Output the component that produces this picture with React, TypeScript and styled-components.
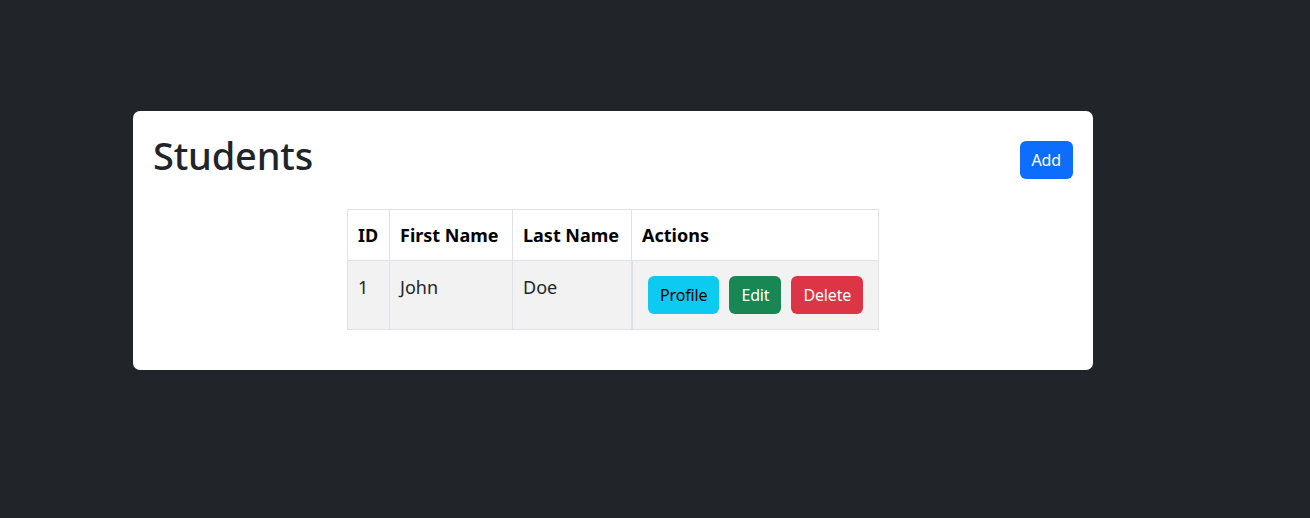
import React from "react";
import styled, { createGlobalStyle } from "styled-components";

const Global = createGlobalStyle`
  html, body { margin: 0; padding: 0; background: #212529; }
  body { font-family: "Noto Sans", "Open Sans", sans-serif; color: #212529; }
  * { box-sizing: border-box; }
`;

const Page = styled.div`
  padding: 111px 0 0 133px;
  min-height: 518px;
`;

const Card = styled.div`
  width: 960px;
  background: #fff;
  border-radius: 7px;
  padding: 20px;
`;

const Header = styled.div`
  display: flex;
  justify-content: space-between;
  align-items: flex-end;
`;

const Title = styled.h1`
  margin: 0;
  font-size: 38px;
  line-height: 48px;
  font-weight: 500;
  color: #212529;
  letter-spacing: -0.2px;
`;

const Button = styled.button<{ $bg: string; $fg: string }>`
  display: inline-block;
  font-family: inherit;
  font-size: 16px;
  line-height: 24px;
  letter-spacing: -0.15px;
  padding: 7px 12px;
  height: 38px;
  border: none;
  border-radius: 6px;
  background: ${(p) => p.$bg};
  color: ${(p) => p.$fg};
  white-space: nowrap;
  cursor: pointer;
`;

const Table = styled.table`
  margin: 30px auto 20px;
  border-collapse: collapse;
  table-layout: fixed;
  width: 531px;
  font-size: 18px;
  line-height: 27px;
`;

const Th = styled.th<{ $w: number }>`
  width: ${(p) => p.$w}px;
  text-align: left;
  font-weight: 700;
  color: #000;
  padding: 12px 10px 11px;
  border: 1px solid #dee2e6;
  background: #fff;
  white-space: nowrap;
`;

const Td = styled.td<{ $accent?: boolean }>`
  vertical-align: top;
  padding: ${(p) => (p.$accent ? "10px" : "13px 10px 10px")};
  border: 1px solid #dee2e6;
  background: #f2f2f2;
  color: #212529;
  white-space: nowrap;
  ${(p) => (p.$accent ? "box-shadow: inset 1px 0 0 #dcdfe3;" : "")}
`;

const Actions = styled.div`
  display: flex;
  gap: 10px;
  padding: 5px 5px 5px 6px;
`;

const students = [{ id: 1, first: "John", last: "Doe" }];

export default function App() {
  return (
    <Page>
      <Global />
      <Card>
        <Header>
          <Title>Students</Title>
          <Button $bg="#0d6efd" $fg="#fff">Add</Button>
        </Header>
        <Table>
          <thead>
            <tr>
              <Th $w={42}>ID</Th>
              <Th $w={123}>First Name</Th>
              <Th $w={119}>Last Name</Th>
              <Th $w={247}>Actions</Th>
            </tr>
          </thead>
          <tbody>
            {students.map((s) => (
              <tr key={s.id}>
                <Td>{s.id}</Td>
                <Td>{s.first}</Td>
                <Td>{s.last}</Td>
                <Td $accent>
                  <Actions>
                    <Button $bg="#0dcaf0" $fg="#000">Profile</Button>
                    <Button $bg="#198754" $fg="#fff">Edit</Button>
                    <Button $bg="#dc3545" $fg="#fff">Delete</Button>
                  </Actions>
                </Td>
              </tr>
            ))}
          </tbody>
        </Table>
      </Card>
    </Page>
  );
}
